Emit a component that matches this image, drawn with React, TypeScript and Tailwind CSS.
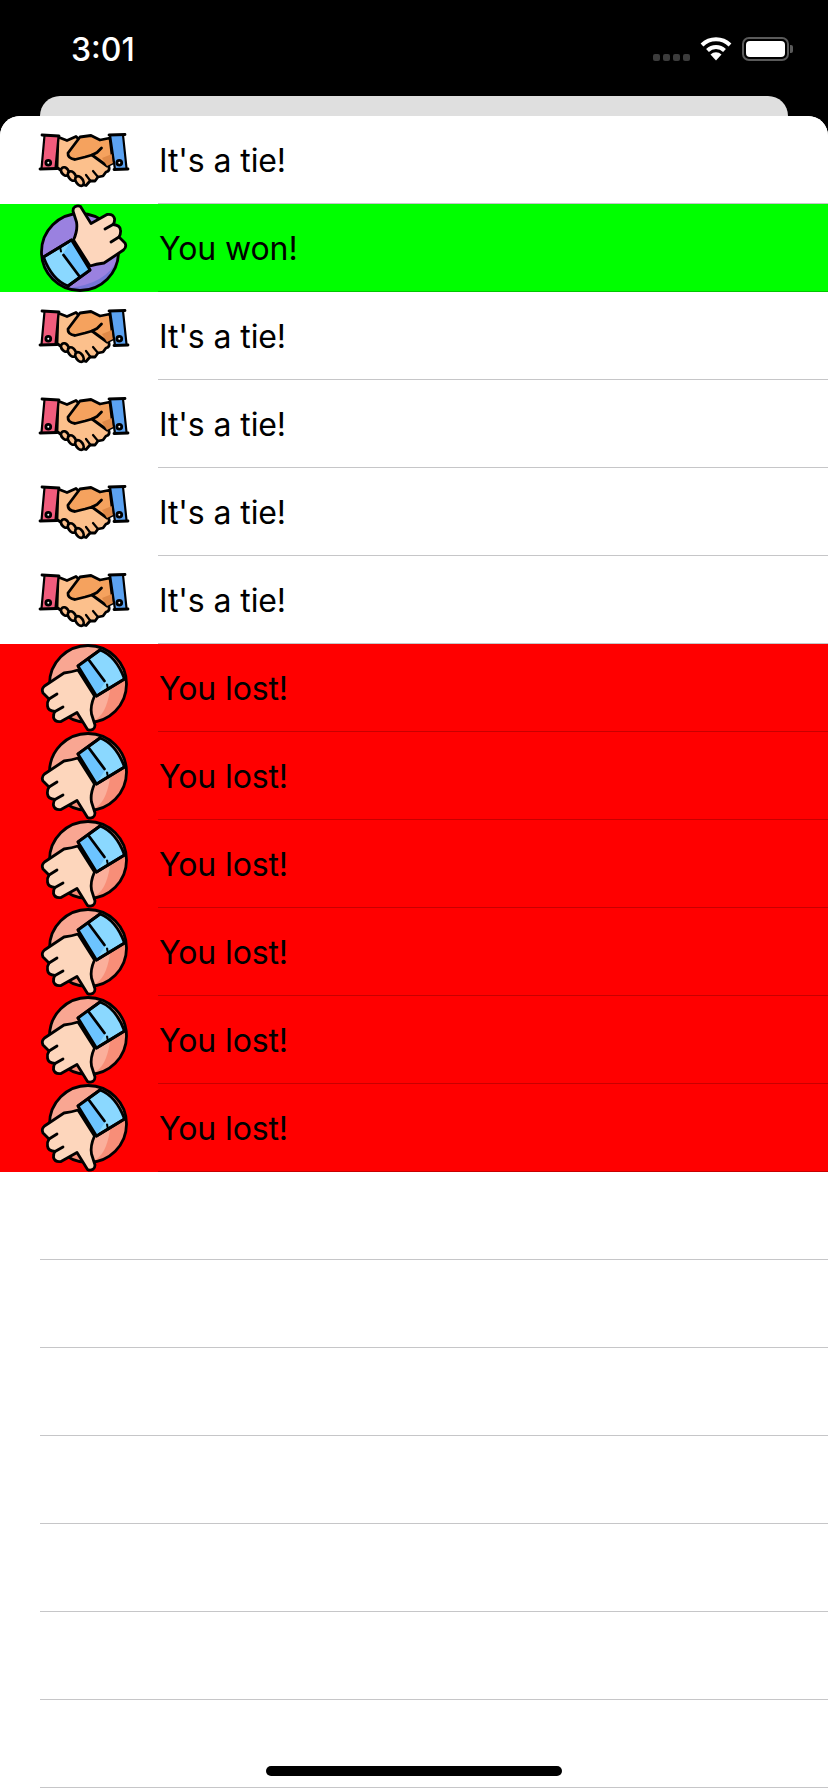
const outline = "#000000";

function Handshake() {
  return (
    <svg viewBox="0 0 88 88" className="w-[88px] h-[88px] shrink-0 overflow-visible">
      <g stroke={outline} strokeWidth="2.8" strokeLinejoin="round" strokeLinecap="round">
        <path d="M18 21 L27 24.5 L36 20.5 L46 30 L61 42 L69 51 Q70 55 66 56 L63 60 L58 61 L55 65 L50 65 L46 69.5 L40 68 L26 58 L17 51.5 Z" fill="#fcc08c" />
        <ellipse cx="25" cy="55.5" rx="3.4" ry="4.6" fill="#fcc08c" transform="rotate(-40 25 55.5)" />
        <ellipse cx="32" cy="60" rx="3.4" ry="5.2" fill="#fcc08c" transform="rotate(-35 32 60)" />
        <ellipse cx="39.5" cy="65" rx="3.4" ry="5.4" fill="#fcc08c" transform="rotate(-35 39.5 65)" />
        <path d="M58 61 L53 55 M50.5 65 L46 59" fill="none" strokeWidth="2.2" />
        <path d="M40 21 L51 19.5 L60 24 L70 22 L73 47 L67 50 L52 39 L45 41 L35 43.5 Q27.5 42.5 28 37 Z" fill="#f5a25e" />
        <path d="M62 42 L72 38 L73 47 L67 50 Z" fill="#e08a48" stroke="none" />
        <path d="M52 39 L57 36.5 L61.5 32" fill="none" />
        <path d="M4.5 19.5 L18.5 20.5 L15.5 52 L1.5 52.5 Z" fill="#f15c7c" stroke="none" />
        <path d="M70 19 L83 19 L86.5 52 L75 53.5 Z" fill="#5ba2f1" stroke="none" />
        <path d="M4.5 19.5 L1.5 52.5 M18.5 20.5 L15.5 52 M70 19 L75 53.5 M83 19 L86.5 52" fill="none" strokeWidth="2.2" />
        <path d="M2 19 L19 20 M0 53 L17 52.5 M69 19 L85 18.5 M74 53.5 L88 53" fill="none" />
        <circle cx="8.3" cy="46.7" r="2.4" fill="#ffffff" />
        <circle cx="79.3" cy="46.7" r="2.4" fill="#ffffff" />
      </g>
    </svg>
  );
}

function Thumb({ down }: { down?: boolean }) {
  return (
    <svg viewBox="0 0 88 88" className="w-[88px] h-[88px] shrink-0 overflow-visible">
      <g transform={down ? "rotate(180 44 44)" : undefined} stroke={outline} strokeWidth="2.8" strokeLinejoin="round" strokeLinecap="round">
        <circle cx="40" cy="48" r="38.5" fill={down ? "#f88e78" : "#9a81e0"} stroke="none" />
        {down ? (
          <>
            <path d="M28 84.5 A38.5 38.5 0 0 0 78.5 50 L50 62 Z" fill="#f9a692" stroke="none" />
            <path d="M34 36 Q37 24 35 11 Q22 16 18 42 Z" fill="#fbaf9b" stroke="none" />
          </>
        ) : (
          <path d="M28 84 Q55 90 70 70 Q76 62 77 56 Q66 80 28 84 Z" fill="#7575d6" stroke="none" />
        )}
        <circle cx="40" cy="48" r="38.5" fill="none" />
        <path d="M3.5 53 L31.5 36 L50 66 L28 82 Q12 76 3.5 53 Z" fill="#8ad8ff" />
        <path d="M23 50 L31.5 36 L50 66 L39.5 73 Z" fill="#6cc4ff" stroke="none" />
        <path d="M3.5 53 L31.5 36 L50 66 L28 82" fill="none" />
        <path d="M23.5 51 L39.5 72.5" fill="none" />
        <path d="M20 43 L21 47.5" fill="none" strokeWidth="2" />
        <path d="M35 2.7 Q38 1 40.5 2.5 L51 19.5 L67 10.5 Q73 9.5 74.5 14.5 Q75 18 73 20.5 Q80 21 80.5 26 Q81 30 79 33 L85 39 Q87 43 83.5 46 L64 59 Q56 60 50 62 L33.5 36 Q38 26 36.5 18 L33 7 Q33 4 35 2.7 Z" fill="#fdd6bc" />
        <path d="M65 25 L73 20.5 M71 38 L79 33" fill="none" />
      </g>
    </svg>
  );
}

function Wifi() {
  return (
    <svg viewBox="0 0 32 24" className="w-8 h-6">
      <path d="M16 23.5 L10.5 17.5 A8 8 0 0 1 21.5 17.5 Z" fill="#fff" />
      <path d="M7.5 13.5 A12 12 0 0 1 24.5 13.5" stroke="#fff" strokeWidth="4" fill="none" />
      <path d="M2 8 A20 20 0 0 1 30 8" stroke="#fff" strokeWidth="4" fill="none" />
    </svg>
  );
}

type Kind = "tie" | "won" | "lost";

const results: Kind[] = ["tie", "won", "tie", "tie", "tie", "tie", "lost", "lost", "lost", "lost", "lost", "lost"];

const labels: Record<Kind, string> = {
  tie: "It's a tie!",
  won: "You won!",
  lost: "You lost!",
};

function ResultRow({ kind }: { kind: Kind }) {
  const bg = kind === "won" ? "bg-[#00ff00]" : kind === "lost" ? "bg-[#ff0000]" : "bg-white";
  const line = kind === "lost" ? "bg-[#c80000]" : kind === "won" ? "bg-[#00c800]" : "bg-[#c6c6c8]";
  return (
    <div className={`h-[88px] relative flex items-center pl-10 ${bg}`}>
      {kind === "tie" ? <Handshake /> : <Thumb down={kind === "lost"} />}
      <span className="ml-[31px] mt-[2px] text-[32px] leading-none tracking-[-0.1px] text-black font-['Inter',sans-serif]">{labels[kind]}</span>
      <div className={`absolute left-[158px] right-0 bottom-0 h-px ${line}`} />
    </div>
  );
}

export default function App() {
  return (
    <div className="w-[828px] h-[1792px] bg-black overflow-hidden relative font-['Inter',sans-serif]">
      <div className="h-[96px] flex items-start justify-between pt-[30px] pl-[71px] pr-[35px]">
        <span className="text-white text-[32px] leading-[40px] font-medium">3:01</span>
        <div className="flex items-center mt-[7px]">
          <div className="flex gap-[3px] mt-[17px] mr-[10px]">
            <div className="w-[7px] h-[7px] rounded-[2px] bg-[#3c3c3c]" />
            <div className="w-[7px] h-[7px] rounded-[2px] bg-[#3c3c3c]" />
            <div className="w-[7px] h-[7px] rounded-[2px] bg-[#3c3c3c]" />
            <div className="w-[7px] h-[7px] rounded-[2px] bg-[#3c3c3c]" />
          </div>
          <Wifi />
          <div className="ml-[10px] w-[47px] h-[24px] rounded-[7px] border-2 border-[#5a5a5a] p-[2px]">
            <div className="w-full h-full bg-white rounded-[4px]" />
          </div>
          <div className="w-[3px] h-[8px] rounded-r-[2px] bg-[#5a5a5a] ml-px" />
        </div>
      </div>
      <div className="h-[20px] mx-10 bg-[#dfdfdf] rounded-t-[20px] w-[748px]" />
      <div className="bg-white rounded-t-[20px] overflow-hidden h-[1676px]">
        {results.map((kind, i) => (
          <ResultRow key={i} kind={kind} />
        ))}
        {[0, 1, 2, 3, 4, 5, 6].map((i) => (
          <div key={i} className="h-[88px] ml-10 border-b border-[#c6c6c8]" />
        ))}
      </div>
      <div className="absolute left-[266px] top-[1766px] w-[296px] h-[10px] rounded-full bg-black" />
    </div>
  );
}
